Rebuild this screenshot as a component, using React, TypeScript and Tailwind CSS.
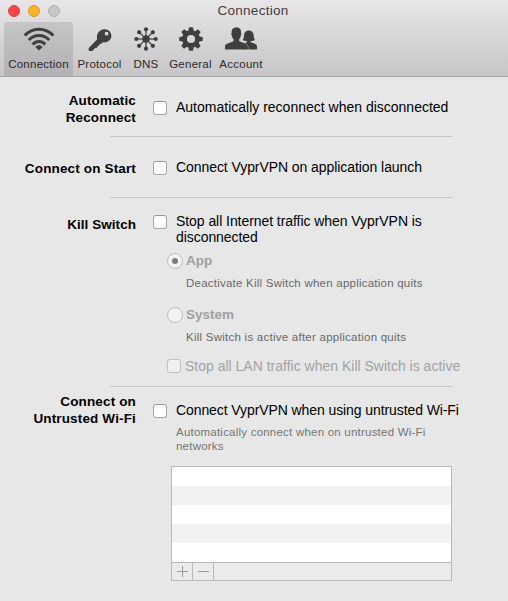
import React from "react";

function WifiIcon() {
  return (
    <svg width="32" height="24" viewBox="0 0 32 24" fill="none" stroke="#3f3f40" strokeWidth="3">
      <path d="M1.7 8.5C9.7 0 22.3 0 30.3 8.5" />
      <path d="M5.7 13.1C11.5 6.9 20.5 6.9 26.3 13.1" />
      <path d="M9.7 17.4C13.4 13.5 18.6 13.5 22.3 17.4" />
      <path d="M12.3 20C14.4 17.8 17.6 17.8 19.7 20L16 23.4Z" fill="#3f3f40" stroke="none" />
    </svg>
  );
}

function KeyIcon() {
  return (
    <svg className="translate-y-px" width="24" height="24" viewBox="0 0 24 24" fill="#3f3f40">
      <path
        fillRule="evenodd"
        d="M15.5 1.2C20 0.6 23.6 3.8 23.4 8C23.2 12.2 19.4 15 14.8 14.3L13 16.1L11.4 16L11.2 17.7L9.3 17.9L9.2 19.7L7.2 20.1L4.3 22.9L0.9 23.1L0.6 20.2L9.2 11.3C8 6.3 11 1.8 15.5 1.2ZM18.6 3.8A1.9 1.9 0 1 0 18.6 7.6A1.9 1.9 0 1 0 18.6 3.8Z"
      />
    </svg>
  );
}

const spokes = [0, 45, 90, 135, 180, 225, 270, 315];

function DnsIcon() {
  return (
    <svg width="24" height="24" viewBox="-12 -12 24 24" fill="#3f3f40">
      <circle r="3.7" />
      {spokes.map((a) => (
        <g key={a} transform={`rotate(${a})`}>
          <path d="M0 0V-9" stroke="#3f3f40" strokeWidth="1.2" />
          <circle cy="-9.7" r="2.1" />
        </g>
      ))}
    </svg>
  );
}

function GearIcon() {
  return (
    <svg width="24" height="24" viewBox="-12 -12 24 24">
      <circle r="6.5" fill="none" stroke="#3f3f40" strokeWidth="4.8" />
      {spokes.map((a) => (
        <path key={a} transform={`rotate(${a})`} d="M-2.6 -8L-2.1 -11.2Q-1.9 -11.8 -1.3 -11.8H1.3Q1.9 -11.8 2.1 -11.2L2.6 -8Z" fill="#3f3f40" />
      ))}
    </svg>
  );
}

function AccountIcon() {
  return (
    <svg width="32" height="24" viewBox="0 0 32 24" fill="#3f3f40">
      <path d="M17.5 16.5L21.9 15.2V14C20.3 14.1 18.8 13.8 17.6 13C19.1 11.4 18.8 9.6 19 7.8C19.3 5 21 3.4 23.8 3.4S28.3 5 28.6 7.8C28.8 9.6 28.6 11.4 30 13C28.8 13.8 27.3 14.1 25.8 14V15.2L30.5 17Q32 17.8 32 19.4V22.4H17.5Z" />
      <path
        d="M0 22.4V19.6Q0 17.6 2 16.8L8.5 14.2V12.2C7.5 11.2 7.1 10 6.9 8.6C6.2 8 6.1 6.4 6.7 6C6.3 2.6 7.9 0.5 11.4 0.5S16.4 2.6 16 6C16.6 6.4 16.5 8 15.8 8.6C15.6 10 15.2 11.2 14.2 12.2V14.2L20.8 16.8Q22.8 17.6 22.8 19.6V22.4Z"
        stroke="#d5d2d5"
        strokeWidth="0.9"
        paintOrder="stroke"
      />
    </svg>
  );
}

function ToolItem({ label, box, active, children }: { label: string; box: string; active?: boolean; children: React.ReactNode }) {
  return (
    <div
      className={`flex h-[54px] flex-col items-center rounded-t-[3px] pt-[5px] ${box} ${active ? "bg-linear-to-b from-[#c6c4c6] to-[#b3b1b3]" : ""}`}
    >
      <div className="flex h-6 items-center">{children}</div>
      <span className="mt-[5px] text-[11.5px] leading-4 tracking-[0.25px] whitespace-nowrap text-[#2a2a2a]">{label}</span>
    </div>
  );
}

function Check({ disabled }: { disabled?: boolean }) {
  return (
    <span
      className={`size-3.5 shrink-0 rounded-[3px] border ${disabled ? "border-[#c0c0c0] bg-[#f0f0f0]" : "border-[#a8a8a8] border-t-[#989898] bg-white"}`}
    />
  );
}

function Radio({ on }: { on?: boolean }) {
  return (
    <span className="flex size-4 shrink-0 items-center justify-center rounded-full border border-[#bdbdbd] bg-[#f2f2f2]">
      {on && <span className="size-1.5 rounded-full bg-[#7c7c7c]" />}
    </span>
  );
}

function Divider() {
  return <div className="ml-[110px] h-px w-[342px] shrink-0 bg-[#c5c5c5]" />;
}

export default function App() {
  return (
    <div className="flex h-[601px] w-[508px] flex-col overflow-hidden bg-[#e7e7e7] font-['Liberation_Sans',Arial,sans-serif] text-black">
      <header className="h-[77px] shrink-0 rounded-t-[5px] border-b border-[#a6a4a6] bg-linear-to-b from-[#e9e6e9] to-[#c7c5c8]">
        <div className="grid h-[22px] grid-cols-[60px_1fr_60px] items-center">
          <div className="flex gap-2 pl-2">
            <span className="size-3 shrink-0 rounded-full border border-[#e03d41] bg-[#fc4449]" />
            <span className="size-3 shrink-0 rounded-full border border-[#dd991f] bg-[#fdb125]" />
            <span className="size-3 shrink-0 rounded-full border border-[#b1b0b1] bg-[#c8c7c8]" />
          </div>
          <h1 className="pr-0.5 text-center text-[13.5px] leading-[22px] tracking-[0.25px] text-[#403f40]">Connection</h1>
        </div>
        <nav className="flex pl-1">
          <ToolItem label="Connection" box="w-[69px]" active><WifiIcon /></ToolItem>
          <ToolItem label="Protocol" box="w-[53px]"><KeyIcon /></ToolItem>
          <ToolItem label="DNS" box="w-[40px]"><DnsIcon /></ToolItem>
          <ToolItem label="General" box="w-[49px]"><GearIcon /></ToolItem>
          <ToolItem label="Account" box="w-[52px]"><AccountIcon /></ToolItem>
        </nav>
      </header>

      <section className="flex h-[59px] shrink-0">
        <h2 className="w-[136px] shrink-0 pt-[15px] text-right text-[13.5px] leading-[17px] font-bold tracking-[0.15px]">Automatic<br />Reconnect</h2>
        <label className="mt-[22px] flex h-[17px] items-center gap-[9px] pl-[17px] text-[14px] whitespace-nowrap"><Check /><span>Automatically reconnect when disconnected</span></label>
      </section>
      <Divider />
      <section className="flex h-[60px] shrink-0">
        <h2 className="w-[136px] shrink-0 pt-[23px] text-right text-[13.5px] leading-[17px] font-bold tracking-[0.15px]">Connect on Start</h2>
        <label className="mt-[22px] flex h-[17px] items-center gap-[9px] pl-[17px] text-[14px] tracking-[-0.07px] whitespace-nowrap"><Check /><span>Connect VyprVPN on application launch</span></label>
      </section>
      <Divider />
      <section className="flex h-[188px] shrink-0">
        <h2 className="w-[136px] shrink-0 pt-[18px] text-right text-[13.5px] leading-[17px] font-bold tracking-[0.05px]">Kill Switch</h2>
        <div className="flex flex-col pl-[17px] whitespace-nowrap">
          <label className="mt-[15px] flex gap-[9px] text-[14px] leading-4 tracking-[-0.06px]"><span className="flex pt-0.5"><Check /></span><span>Stop all Internet traffic when VyprVPN is<br />disconnected</span></label>
          <label className="mt-[8px] ml-[14px] flex h-4 items-center gap-[3px] text-[13.5px] font-bold text-[#a0a0a0]"><Radio on /><span>App</span></label>
          <p className="mt-[6px] ml-[33px] text-[11.5px] leading-4 tracking-[0.23px] text-[#686868]">Deactivate Kill Switch when application quits</p>
          <label className="mt-4 ml-[14px] flex h-4 items-center gap-[3px] text-[13.5px] font-bold text-[#a0a0a0]"><Radio /><span>System</span></label>
          <p className="mt-[6px] ml-[33px] text-[11.5px] leading-4 tracking-[0.25px] text-[#686868]">Kill Switch is active after application quits</p>
          <label className="mt-[13px] ml-[14px] flex h-4 items-center gap-1 text-[14px] text-[#a2a2a2]"><Check disabled /><span>Stop all LAN traffic when Kill Switch is active</span></label>
        </div>
      </section>
      <Divider />
      <section className="flex min-h-0 flex-1">
        <h2 className="w-[136px] shrink-0 pt-[6px] text-right text-[13.5px] leading-[17px] font-bold tracking-[0.15px]">Connect on<br />Untrusted Wi-Fi</h2>
        <div className="flex flex-col pl-[17px] whitespace-nowrap">
          <label className="mt-[15px] flex h-[17px] items-center gap-[9px] text-[14px] tracking-[-0.09px]"><Check /><span>Connect VyprVPN when using untrusted Wi-Fi</span></label>
          <p className="mt-[6px] ml-[23px] text-[11.5px] leading-[14px] tracking-[0.22px] text-[#747474]">Automatically connect when on untrusted Wi-Fi<br />networks</p>
          <div className="mt-[13px] ml-[18px] w-[281px] border border-[#b8b8b8]">
            <div className="h-[19px] bg-white" />
            <div className="h-[19px] bg-[#f2f2f2]" />
            <div className="h-[19px] bg-white" />
            <div className="h-[19px] bg-[#f2f2f2]" />
            <div className="h-[19px] bg-white" />
            <div className="flex h-[18px] border-t border-[#b8b8b8] bg-[#ebebeb]">
              <span className="flex w-[21px] items-center justify-center border-r border-[#b8b8b8]">
                <svg width="11" height="11" viewBox="0 0 11 11" stroke="#999"><path d="M0 5.5H11M5.5 0V11" /></svg>
              </span>
              <span className="flex w-[21px] items-center justify-center border-r border-[#b8b8b8]">
                <svg width="11" height="11" viewBox="0 0 11 11" stroke="#999"><path d="M0 5.5H11" /></svg>
              </span>
            </div>
          </div>
        </div>
      </section>
    </div>
  );
}
